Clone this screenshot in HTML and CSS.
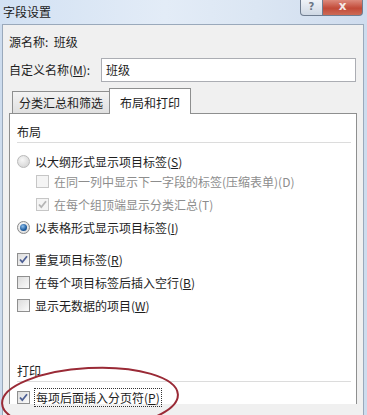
FILE: index.html
```html
<!DOCTYPE html>
<html lang="zh-CN">
<head>
    <meta charset="UTF-8">
    <link rel="stylesheet" href="styles.css">
    <title>字段设置</title>
</head>
<body>
    <div class="window">
        <div class="titlebar">
            <span class="title">字段设置</span>
            <div class="caption-buttons">
                <span class="btn-help">?</span>
                <span class="btn-close">x</span>
            </div>
        </div>

        <div class="dialog">
            <div class="src-row">源名称:&nbsp;&nbsp;班级</div>
            <div class="name-row">
                <label>自定义名称(<u>M</u>):</label>
                <div class="textbox">班级</div>
            </div>

            <div class="tabs">
                <div class="tab">分类汇总和筛选</div>
                <div class="tab active">布局和打印</div>
            </div>

            <div class="panel">
                <div class="group-title">布局</div>

                <div class="opt first">
                    <span class="radio disabled"></span>
                    <span>以大纲形式显示项目标签(<u>S</u>)</span>
                </div>
                <div class="opt sub tight">
                    <span class="check disabled"></span>
                    <span class="muted">在同一列中显示下一字段的标签(压缩表单)(D)</span>
                </div>
                <div class="opt sub">
                    <span class="check disabled checked">
                        <svg viewBox="0 0 13 13" width="13" height="13"><path d="M3 6.5 L5.3 9.2 L10 3.3" fill="none" stroke="#b4b4b4" stroke-width="1.8"/></svg>
                    </span>
                    <span class="muted">在每个组顶端显示分类汇总(T)</span>
                </div>
                <div class="opt">
                    <span class="radio selected"></span>
                    <span>以表格形式显示项目标签(<u>I</u>)</span>
                </div>

                <div class="opt spaced">
                    <span class="check">
                        <svg viewBox="0 0 13 13" width="13" height="13"><path d="M3 6.5 L5.3 9.2 L10 3.3" fill="none" stroke="#4d5f94" stroke-width="1.8"/></svg>
                    </span>
                    <span>重复项目标签(<u>R</u>)</span>
                </div>
                <div class="opt">
                    <span class="check"></span>
                    <span>在每个项目标签后插入空行(<u>B</u>)</span>
                </div>
                <div class="opt">
                    <span class="check"></span>
                    <span>显示无数据的项目(<u>W</u>)</span>
                </div>

                <div class="group-title print">打印</div>
                <div class="opt after-print">
                    <span class="check">
                        <svg viewBox="0 0 13 13" width="13" height="13"><path d="M3 6.5 L5.3 9.2 L10 3.3" fill="none" stroke="#4d5f94" stroke-width="1.8"/></svg>
                    </span>
                    <span class="focused">每项后面插入分页符(<u>P</u>)</span>
                </div>
            </div>
        </div>

        <svg class="mark" width="367" height="415" viewBox="0 0 367 415">
            <ellipse cx="90" cy="399" rx="88" ry="31" transform="rotate(-3 90 399)" fill="none" stroke="#9a2a36" stroke-width="2"/>
        </svg>
    </div>
</body>
</html>
```

FILE: styles.css
```css
html, body {
    margin: 0;
    padding: 0;
}

body {
    font-family: "Noto Sans CJK SC", "Noto Sans", sans-serif;
    font-size: 12px;
    color: #1e1e1e;
}

.window {
    position: relative;
    width: 367px;
    height: 415px;
    overflow: hidden;
    background: #cddcee;
}

.titlebar {
    display: flex;
    align-items: flex-start;
    height: 24px;
    background: linear-gradient(to right, #d2e1f3 0%, #e3ecf7 45%, #dbe6f3 70%, #cfdcee 100%);
}

.title {
    margin: 3px 0 0 3px;
    font-size: 12px;
    line-height: 17px;
    color: #1a1a1a;
}

.caption-buttons {
    display: flex;
    margin-left: auto;
    margin-right: 4px;
}

.btn-help,
.btn-close {
    height: 15px;
    line-height: 13px;
    text-align: center;
    border: 1px solid #6f7d90;
    border-top: none;
    font-family: "DejaVu Sans", sans-serif;
    font-weight: bold;
}

.btn-help {
    width: 21px;
    border-radius: 0 0 0 4px;
    background: linear-gradient(#eef2f7, #cfd8e4);
    color: #6a7585;
    font-size: 10px;
}

.btn-close {
    width: 39px;
    border-left: none;
    border-radius: 0 0 4px 0;
    background: linear-gradient(#dd8a7c, #c24a38 55%, #cc6a55);
    color: #f4e8e6;
    font-size: 12px;
}

.dialog {
    height: 391px;
    margin: 0 3px 0 2px;
    border: 1px solid #9aa9bb;
    border-bottom: none;
    background: #f0f0f0;
}

.src-row {
    margin: 9px 0 0 6px;
    line-height: 16px;
}

.name-row {
    display: flex;
    align-items: center;
    margin: 8px 0 0 6px;
}

.name-row label {
    width: 92px;
    line-height: 16px;
}

.textbox {
    width: 249px;
    height: 22px;
    padding-left: 4px;
    line-height: 22px;
    border: 1px solid #abadb3;
    background: #fff;
}

.tabs {
    display: flex;
    align-items: flex-end;
    height: 25px;
    margin: 6px 0 0 9px;
}

.tab {
    width: 96px;
    height: 21px;
    line-height: 21px;
    text-align: center;
    border: 1px solid #8e8f8f;
    border-bottom: none;
    background: linear-gradient(#f3f3f3, #e0e0e0);
    font-size: 12px;
}

.tab.active {
    position: relative;
    width: 80px;
    height: 25px;
    line-height: 27px;
    margin-left: -1px;
    background: #fff;
    z-index: 1;
    margin-bottom: -1px;
}

.panel {
    height: 290px;
    margin: 0 6px 0 6px;
    padding: 0 5px 0 7px;
    border: 1px solid #8e8f8f;
    border-bottom: none;
    background: #fff;
}

.group-title {
    margin-top: 10px;
    padding-bottom: 2px;
    line-height: 16px;
    border-bottom: 1px solid #dcdcdc;
}

.group-title.print {
    margin-top: 48px;
}

.opt {
    display: flex;
    align-items: center;
    height: 20px;
    margin-top: 3px;
    white-space: nowrap;
}

.opt.first {
    margin-top: 8px;
}

.opt.tight {
    margin-top: 0;
}

.opt.spaced {
    margin-top: 12px;
}

.opt.after-print {
    margin-top: 5px;
}

.opt.sub {
    padding-left: 19px;
}

.radio,
.check {
    flex: none;
    width: 11px;
    height: 11px;
    margin-right: 5px;
    border: 1px solid #8f8f8f;
    background: linear-gradient(135deg, #dcdcdc, #fbfbfb);
    position: relative;
}

.check svg {
    position: absolute;
    left: -1px;
    top: -1px;
}

.check.disabled {
    border-color: #c6c6c6;
    background: #f4f4f4;
}

.radio {
    border-radius: 50%;
    border-color: #8a8a8a;
    background: radial-gradient(circle at 40% 35%, #ffffff, #dedede 70%);
}

.radio.disabled {
    border-color: #b9b9b9;
    background: radial-gradient(circle at 40% 35%, #f7f7f7, #d8d8d8 75%);
}

.radio.selected::after {
    content: "";
    position: absolute;
    left: 2px;
    top: 2px;
    width: 7px;
    height: 7px;
    border-radius: 50%;
    background: radial-gradient(circle at 40% 35%, #8fc0ec, #1b5a9e 60%, #123f73);
}

.muted {
    color: #8d8d8d;
}

.focused {
    outline: 1px dotted #333;
    outline-offset: 0;
    padding: 0 1px;
}

.mark {
    position: absolute;
    left: 0;
    top: 0;
    pointer-events: none;
}
```
